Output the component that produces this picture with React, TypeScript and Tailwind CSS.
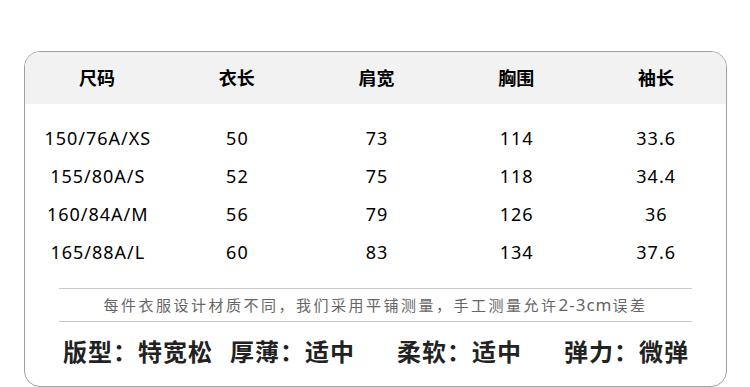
import React from "react";

const headers = ["尺码", "衣长", "肩宽", "胸围", "袖长"];

const rows = [
  ["150/76A/XS", "50", "73", "114", "33.6"],
  ["155/80A/S", "52", "75", "118", "34.4"],
  ["160/84A/M", "56", "79", "126", "36"],
  ["165/88A/L", "60", "83", "134", "37.6"],
];

const traits = ["版型：特宽松", "厚薄：适中", "柔软：适中", "弹力：微弹"];

const App = () => {
  return (
    <div
      className="w-[750px] h-[387px] bg-white overflow-hidden pt-[51px] pl-[24px]"
      style={{ fontFamily: '"Noto Sans", "Noto Sans CJK SC", sans-serif' }}
    >
      <div className="w-[703px] h-[336px] border border-[#a0a0a0] rounded-[16px] overflow-hidden flex flex-col">
        <div className="h-[52px] bg-[#f2f2f2] grid grid-cols-5 items-center pl-[2px]">
          {headers.map((h) => (
            <div key={h} className="text-center text-[18px] font-bold text-black">
              {h}
            </div>
          ))}
        </div>

        <div className="pt-[15px] pl-[3px]">
          {rows.map((r) => (
            <div key={r[0]} className="h-[38px] grid grid-cols-5 items-center">
              {r.map((c, i) => (
                <div key={i} className="text-center text-[18px] tracking-[1px] text-black">
                  {c}
                </div>
              ))}
            </div>
          ))}
        </div>

        <div className="mx-[34px] mt-[17px] border-t border-b border-[#c8c8c8] h-[34px] flex items-center justify-center">
          <span className="text-[15px] tracking-[2.5px] text-[#666]">
            每件衣服设计材质不同，我们采用平铺测量，手工测量允许<span className="text-[17px] tracking-[1px]">2-3cm</span>误差
          </span>
        </div>

        <div className="pl-[38px] pt-[14px] grid grid-cols-[167px_167px_167px_167px]">
          {traits.map((t) => (
            <div key={t} className="text-[24px] tracking-[1px] font-bold text-[#222] leading-[32px]">
              {t}
            </div>
          ))}
        </div>
      </div>
    </div>
  );
};

export default App;
